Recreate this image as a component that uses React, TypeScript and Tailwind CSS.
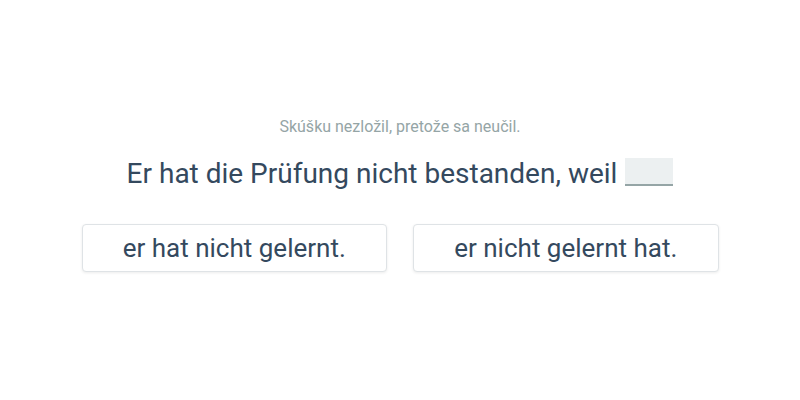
import React from 'react';

// Single choice exercise: pick the correct word order
const options = ['er hat nicht gelernt.', 'er nicht gelernt hat.'];

export default function App() {
  return (
    <div className="h-[400px] w-full bg-white font-['Roboto',sans-serif] flex flex-col items-center pt-[115px]">
      <p className="text-[16px] leading-[24px] text-[#95a5a6]">Skúšku nezložil, pretože sa neučil.</p>
      <div className="mt-[15px] flex items-center gap-2 text-[28px] leading-[40px] text-[#34495e]">
        <span>Er hat die Prüfung nicht bestanden, weil</span>
        <span className="mb-[4px] inline-block h-[28px] w-[48px] bg-[#ecf0f1] border-b-2 border-[#95a5a6]" />
      </div>
      <div className="mt-[30px] grid w-[637px] grid-cols-2 gap-[26px]">
        {options.map((o) => (
          <button
            key={o}
            className="h-[48px] rounded-[4px] border border-[#dfe3e6] bg-white text-[26px] text-[#34495e] shadow-[0_1px_3px_rgba(0,0,0,0.08)]"
          >
            {o}
          </button>
        ))}
      </div>
    </div>
  );
}
